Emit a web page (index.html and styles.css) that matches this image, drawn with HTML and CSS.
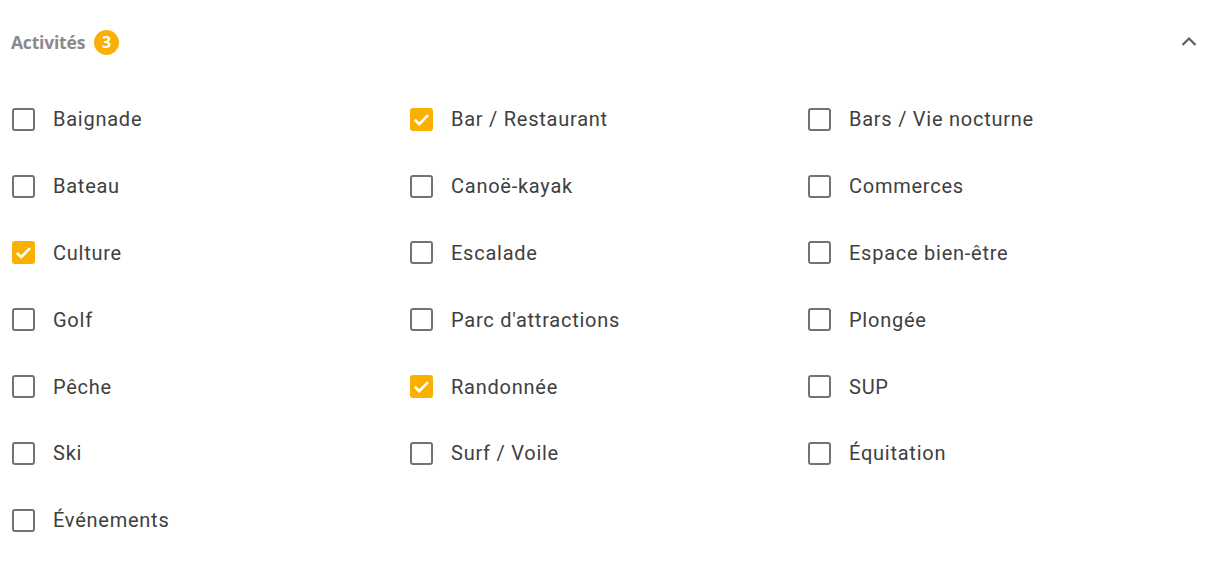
FILE: index.html
```html
<!DOCTYPE html>
<html lang="fr">
<head>
<meta charset="utf-8">
<link rel="stylesheet" href="styles.css">
</head>
<body>
<div class="panel">
  <div class="header">
    <div class="title">Activités <span class="badge">3</span></div>
    <svg class="chevron" width="24" height="24" viewBox="0 0 24 24"><path d="M5.5 15 L12 8.5 L18.5 15" fill="none" stroke="#5f5f5f" stroke-width="2.2"/></svg>
  </div>
  <div class="grid">
    <label class="item"><span class="box"></span>Baignade</label>
    <label class="item"><span class="box on"><svg viewBox="0 0 24 24"><path d="M5 12.3 L9.6 16.8 L18.8 7.4" fill="none" stroke="#fff" stroke-width="2.8"/></svg></span>Bar / Restaurant</label>
    <label class="item"><span class="box"></span>Bars / Vie nocturne</label>
    <label class="item"><span class="box"></span>Bateau</label>
    <label class="item"><span class="box"></span>Canoë-kayak</label>
    <label class="item"><span class="box"></span>Commerces</label>
    <label class="item"><span class="box on"><svg viewBox="0 0 24 24"><path d="M5 12.3 L9.6 16.8 L18.8 7.4" fill="none" stroke="#fff" stroke-width="2.8"/></svg></span>Culture</label>
    <label class="item"><span class="box"></span>Escalade</label>
    <label class="item"><span class="box"></span>Espace bien-être</label>
    <label class="item"><span class="box"></span>Golf</label>
    <label class="item"><span class="box"></span>Parc d'attractions</label>
    <label class="item"><span class="box"></span>Plongée</label>
    <label class="item"><span class="box"></span>Pêche</label>
    <label class="item"><span class="box on"><svg viewBox="0 0 24 24"><path d="M5 12.3 L9.6 16.8 L18.8 7.4" fill="none" stroke="#fff" stroke-width="2.8"/></svg></span>Randonnée</label>
    <label class="item"><span class="box"></span>SUP</label>
    <label class="item"><span class="box"></span>Ski</label>
    <label class="item"><span class="box"></span>Surf / Voile</label>
    <label class="item"><span class="box"></span>Équitation</label>
    <label class="item"><span class="box"></span>Événements</label>
  </div>
</div>
</body>
</html>
```
FILE: styles.css
```css
html, body { margin: 0; padding: 0; background: #fff; }
.panel { padding: 0 5px 0 12px; width: 1189px; }
.header {
  height: 86px;
  display: flex;
  align-items: center;
  justify-content: space-between;
  margin-left: -1px;
  box-sizing: border-box;
  padding-bottom: 2px;
}
.title {
  font-family: "Open Sans", sans-serif;
  font-weight: 700;
  font-size: 17.5px;
  color: #8a8a8a;
  display: flex;
  align-items: center;
  gap: 9px;
  letter-spacing: -0.2px;
}
.badge {
  display: inline-flex;
  align-items: center;
  justify-content: center;
  width: 25px;
  height: 25px;
  border-radius: 50%;
  background: #f9b000;
  color: #fff;
  font-size: 16px;
  font-weight: 700;
  letter-spacing: 0;
}
.grid {
  display: grid;
  grid-template-columns: 398px 398px 398px;
  grid-auto-rows: 66.8px;
}
.item {
  display: flex;
  align-items: center;
  font-family: Roboto, sans-serif;
  font-size: 20px;
  color: #404040;
  letter-spacing: 0.75px;
}
.box {
  width: 23px;
  height: 23px;
  box-sizing: border-box;
  border: 2px solid #737373;
  border-radius: 3px;
  margin-right: 18px;
  flex: none;
  display: flex;
}
.box.on {
  background: #f9b000;
  border-color: #f9b000;
}
.box svg { width: 23px; height: 23px; margin: -2px; flex: none; }
```
